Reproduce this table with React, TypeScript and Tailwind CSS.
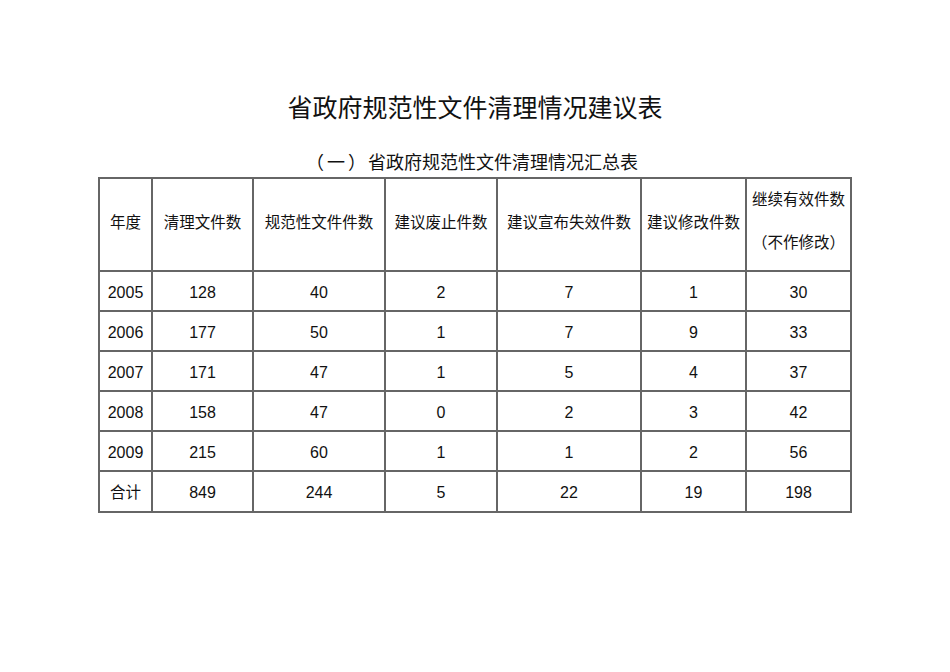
import React from "react";

const rows: [string, string, string, string, string, string, string][] = [
  ["2005", "128", "40", "2", "7", "1", "30"],
  ["2006", "177", "50", "1", "7", "9", "33"],
  ["2007", "171", "47", "1", "5", "4", "37"],
  ["2008", "158", "47", "0", "2", "3", "42"],
  ["2009", "215", "60", "1", "1", "2", "56"],
  ["合计", "849", "244", "5", "22", "19", "198"],
];

const widths = [53, 101, 132, 112, 144, 105, 105];
const headers = ["年度", "清理文件数", "规范性文件件数", "建议废止件数", "建议宣布失效件数", "建议修改件数"];

const cjk = { fontFamily: '"Noto Sans CJK SC", sans-serif' };

export default function App() {
  return (
    <div
      className="w-[950px] h-[672px] bg-white text-[#111] flex flex-col items-center pt-[92px]"
      style={{ fontFamily: '"Liberation Sans", "Noto Sans CJK SC", sans-serif' }}
    >
      <h1 className="text-[25px] leading-8 font-normal">省政府规范性文件清理情况建议表</h1>
      <div className="mt-[25px] text-[18px] leading-6 flex" style={cjk}>
        <span className="-ml-[6px] mr-[3px]">（</span>
        <span>一</span>
        <span className="ml-[3px]">）</span>
        <span className="ml-[2px]">省政府规范性文件清理情况汇总表</span>
      </div>
      <table className="mt-[4px] table-fixed border-collapse border-2 border-[#555] w-[752px] text-[16px]">
        <colgroup>
          {widths.map((w, i) => (
            <col key={i} style={{ width: w }} />
          ))}
        </colgroup>
        <thead>
          <tr className="h-[93px] text-[15.5px]">
            {headers.map((h) => (
              <th key={h} className="border-2 border-[#666] font-normal text-center align-middle p-0 pb-[5px]" style={cjk}>
                {h}
              </th>
            ))}
            <th className="border-2 border-[#666] font-normal text-center align-middle p-0 pb-[5px]" style={cjk}>
              <div className="leading-[43px] -mt-[4px]">继续有效件数</div>
              <div className="leading-[43px]">（不作修改）</div>
            </th>
          </tr>
        </thead>
        <tbody>
          {rows.map((r, ri) => (
            <tr key={r[0]} className={ri === rows.length - 1 ? "h-[41px]" : "h-[40px]"}>
              {r.map((c, i) => (
                <td
                  key={i}
                  className={`border-2 border-[#666] text-center align-middle p-0 pt-[3px] ${i === 0 && c === "合计" ? "text-[15.5px]" : ""}`}
                >
                  {c}
                </td>
              ))}
            </tr>
          ))}
        </tbody>
      </table>
    </div>
  );
}
